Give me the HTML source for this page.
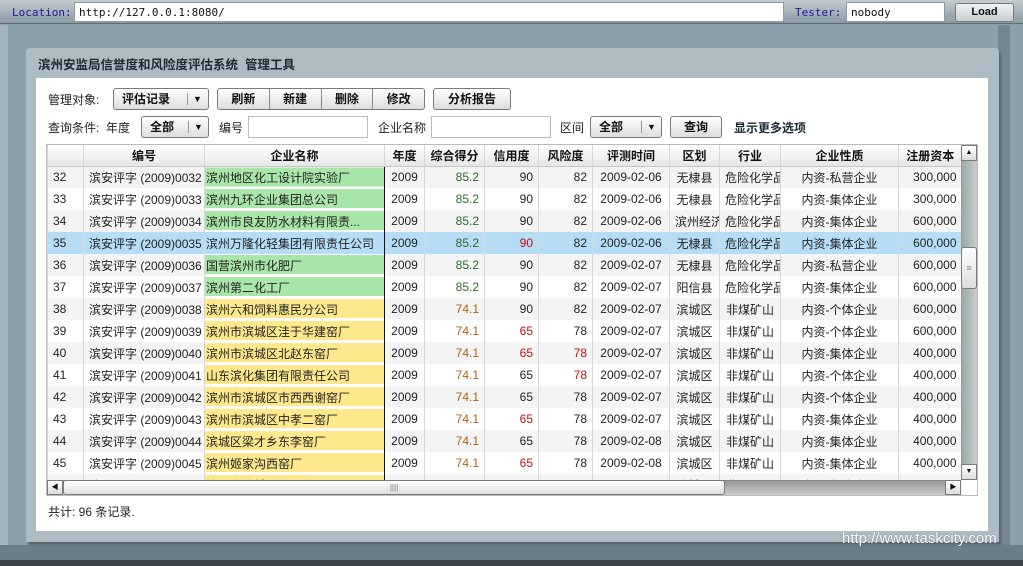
<!DOCTYPE html><html><head><meta charset="utf-8"><style>
*{box-sizing:border-box;margin:0;padding:0}
body{width:1023px;height:566px;overflow:hidden;position:relative;background:#8da0aa;font-family:"Liberation Sans","Noto Sans CJK SC",sans-serif;font-size:12px;color:#222}
.abs{position:absolute}
.topbar{left:0;top:0;width:1023px;height:24px;background:linear-gradient(#c4ccd0,#8a9aa3);border-bottom:1px solid #5e6e76}
.inp{background:#fff;border:1px solid #8c9aa2;height:20px;font-size:11px;font-family:"DejaVu Sans Mono","Liberation Mono",monospace;padding:3px 4px;color:#111}
.lbl{color:#1a1aa0;font-size:11px;font-family:"DejaVu Sans Mono",monospace}
.btn{background:linear-gradient(#fff,#ddd);border:1px solid #7a7a7a;border-radius:3px;font-weight:bold;text-align:center;color:#111;font-size:12px}
.panel{left:26px;top:48px;width:973px;height:494px;background:#adbbc2;border-radius:4px 4px 0 0;box-shadow:2px 3px 2px #56656d}
.white{left:36px;top:78px;width:952px;height:453px;background:#fff}
table{border-collapse:collapse;table-layout:fixed}
td,th{height:22px;border-left:1px solid #d8d8d8;white-space:nowrap;overflow:hidden;font-size:12px;font-weight:normal;padding:0 5px}
th{font-weight:bold;text-align:center;background:linear-gradient(#fff,#e6e6e6);border-bottom:1px solid #c8c8c8;height:21px;color:#111}
tr:nth-child(even) td{background:#f4f4f4}
tr.sel td{background:#b5ddf6!important}
td.n{text-align:left}
td.c{text-align:center}
td.r{text-align:right}
td.g{background:linear-gradient(#fff 0,#fff 1px,#a9e6a9 1px,#a9e6a9 20px,#fff 20px)!important;border-right:1px solid #111;padding-left:1px}
td.y{background:linear-gradient(#fff 0,#fff 1px,#fde98c 1px,#fde98c 20px,#fff 20px)!important;border-right:1px solid #111;padding-left:1px}
.sg{color:#2c6a2c}.so{color:#b06010}.red{color:#c01010}
</style></head><body>
<div class="abs topbar"></div>
<div class="abs lbl" style="left:12px;top:6px">Location:</div>
<div class="abs inp" style="left:74px;top:2px;width:710px">http://127.0.0.1:8080/</div>
<div class="abs lbl" style="left:795px;top:6px">Tester:</div>
<div class="abs inp" style="left:846px;top:2px;width:99px">nobody</div>
<div class="abs btn" style="left:955px;top:3px;width:59px;height:19px;font-size:11px;line-height:17px;background:linear-gradient(#eef1f2,#c6cfd3)">Load</div>
<div class="abs" style="left:0;top:25px;width:8px;height:535px;background:#a5b3ba"></div>
<div class="abs" style="left:0;top:545px;width:1023px;height:15px;background:#6b7e88"></div>
<div class="abs" style="left:0;top:560px;width:1023px;height:6px;background:#3b464c"></div>
<div class="abs" style="left:998px;top:25px;width:12px;height:520px;background:#74878f"></div>
<div class="abs panel"></div>
<div class="abs" style="left:38px;top:54px;font-weight:bold;font-size:12.5px;color:#1c2a33">滨州安监局信誉度和风险度评估系统&nbsp; 管理工具</div>
<div class="abs white"></div>
<div class="abs" style="left:48px;top:91px">管理对象:</div>
<div class="abs btn" style="left:113px;top:88px;width:96px;height:22px;line-height:20px;text-align:left;padding-left:8px">评估记录<span style="position:absolute;left:73px;top:4px;height:12px;border-left:1px solid #999"></span><span style="position:absolute;left:79px;font-size:9px">▼</span></div>
<div class="abs btn" style="left:217px;top:88px;width:208px;height:22px;line-height:20px;display:flex"><span style="flex:1;border-right:1px solid #888">刷新</span><span style="flex:1;border-right:1px solid #888">新建</span><span style="flex:1;border-right:1px solid #888">删除</span><span style="flex:1">修改</span></div>
<div class="abs btn" style="left:433px;top:88px;width:78px;height:22px;line-height:20px">分析报告</div>
<div class="abs" style="left:48px;top:119px">查询条件:&nbsp; 年度</div>
<div class="abs btn" style="left:141px;top:116px;width:68px;height:22px;line-height:20px;text-align:left;padding-left:8px">全部<span style="position:absolute;left:46px;top:4px;height:12px;border-left:1px solid #999"></span><span style="position:absolute;left:52px;font-size:9px">▼</span></div>
<div class="abs" style="left:219px;top:119px">编号</div>
<div class="abs inp" style="left:248px;top:116px;width:120px;height:22px;border-color:#bbb"></div>
<div class="abs" style="left:378px;top:119px">企业名称</div>
<div class="abs inp" style="left:431px;top:116px;width:120px;height:22px;border-color:#bbb"></div>
<div class="abs" style="left:560px;top:119px">区间</div>
<div class="abs btn" style="left:590px;top:116px;width:72px;height:22px;line-height:20px;text-align:left;padding-left:8px">全部<span style="position:absolute;left:50px;top:4px;height:12px;border-left:1px solid #999"></span><span style="position:absolute;left:56px;font-size:9px">▼</span></div>
<div class="abs btn" style="left:670px;top:116px;width:52px;height:22px;line-height:20px">查询</div>
<div class="abs" style="left:734px;top:119px;font-weight:bold;color:#1c2a33">显示更多选项</div>

<div class="abs" style="left:46px;top:144px;width:932px;height:352px;border:1px solid #bbb;overflow:hidden;background:#fff">
<table style="width:914px">
<colgroup><col style="width:36px"><col style="width:121px"><col style="width:180px"><col style="width:40px"><col style="width:60px"><col style="width:54px"><col style="width:54px"><col style="width:77px"><col style="width:50px"><col style="width:61px"><col style="width:118px"><col style="width:63px"></colgroup>
<tr><th></th><th>编号</th><th>企业名称</th><th>年度</th><th>综合得分</th><th>信用度</th><th>风险度</th><th>评测时间</th><th>区划</th><th>行业</th><th>企业性质</th><th>注册资本</th></tr>
<tr><td>32</td><td class="n">滨安评字 (2009)0032</td><td class="g">滨州地区化工设计院实验厂</td><td class="c">2009</td><td class="r sg">85.2</td><td class="r">90</td><td class="r">82</td><td class="c">2009-02-06</td><td class="c">无棣县</td><td>危险化学品</td><td class="c">内资-私营企业</td><td class="r">300,000</td></tr>
<tr><td>33</td><td class="n">滨安评字 (2009)0033</td><td class="g">滨州九环企业集团总公司</td><td class="c">2009</td><td class="r sg">85.2</td><td class="r">90</td><td class="r">82</td><td class="c">2009-02-06</td><td class="c">无棣县</td><td>危险化学品</td><td class="c">内资-集体企业</td><td class="r">300,000</td></tr>
<tr><td>34</td><td class="n">滨安评字 (2009)0034</td><td class="g">滨州市良友防水材料有限责...</td><td class="c">2009</td><td class="r sg">85.2</td><td class="r">90</td><td class="r">82</td><td class="c">2009-02-06</td><td>滨州经济</td><td>危险化学品</td><td class="c">内资-集体企业</td><td class="r">600,000</td></tr>
<tr class="sel"><td>35</td><td class="n">滨安评字 (2009)0035</td><td class="g">滨州万隆化轻集团有限责任公司</td><td class="c">2009</td><td class="r sg">85.2</td><td class="r red">90</td><td class="r">82</td><td class="c">2009-02-06</td><td class="c">无棣县</td><td>危险化学品</td><td class="c">内资-集体企业</td><td class="r">600,000</td></tr>
<tr><td>36</td><td class="n">滨安评字 (2009)0036</td><td class="g">国营滨州市化肥厂</td><td class="c">2009</td><td class="r sg">85.2</td><td class="r">90</td><td class="r">82</td><td class="c">2009-02-07</td><td class="c">无棣县</td><td>危险化学品</td><td class="c">内资-私营企业</td><td class="r">600,000</td></tr>
<tr><td>37</td><td class="n">滨安评字 (2009)0037</td><td class="g">滨州第二化工厂</td><td class="c">2009</td><td class="r sg">85.2</td><td class="r">90</td><td class="r">82</td><td class="c">2009-02-07</td><td class="c">阳信县</td><td>危险化学品</td><td class="c">内资-集体企业</td><td class="r">600,000</td></tr>
<tr><td>38</td><td class="n">滨安评字 (2009)0038</td><td class="y">滨州六和饲料惠民分公司</td><td class="c">2009</td><td class="r so">74.1</td><td class="r">90</td><td class="r">82</td><td class="c">2009-02-07</td><td class="c">滨城区</td><td class="c">非煤矿山</td><td class="c">内资-个体企业</td><td class="r">600,000</td></tr>
<tr><td>39</td><td class="n">滨安评字 (2009)0039</td><td class="y">滨州市滨城区洼于华建窑厂</td><td class="c">2009</td><td class="r so">74.1</td><td class="r red">65</td><td class="r">78</td><td class="c">2009-02-07</td><td class="c">滨城区</td><td class="c">非煤矿山</td><td class="c">内资-个体企业</td><td class="r">600,000</td></tr>
<tr><td>40</td><td class="n">滨安评字 (2009)0040</td><td class="y">滨州市滨城区北赵东窑厂</td><td class="c">2009</td><td class="r so">74.1</td><td class="r red">65</td><td class="r red">78</td><td class="c">2009-02-07</td><td class="c">滨城区</td><td class="c">非煤矿山</td><td class="c">内资-集体企业</td><td class="r">400,000</td></tr>
<tr><td>41</td><td class="n">滨安评字 (2009)0041</td><td class="y">山东滨化集团有限责任公司</td><td class="c">2009</td><td class="r so">74.1</td><td class="r">65</td><td class="r red">78</td><td class="c">2009-02-07</td><td class="c">滨城区</td><td class="c">非煤矿山</td><td class="c">内资-个体企业</td><td class="r">400,000</td></tr>
<tr><td>42</td><td class="n">滨安评字 (2009)0042</td><td class="y">滨州市滨城区市西西谢窑厂</td><td class="c">2009</td><td class="r so">74.1</td><td class="r">65</td><td class="r">78</td><td class="c">2009-02-07</td><td class="c">滨城区</td><td class="c">非煤矿山</td><td class="c">内资-个体企业</td><td class="r">400,000</td></tr>
<tr><td>43</td><td class="n">滨安评字 (2009)0043</td><td class="y">滨州市滨城区中孝二窑厂</td><td class="c">2009</td><td class="r so">74.1</td><td class="r red">65</td><td class="r">78</td><td class="c">2009-02-07</td><td class="c">滨城区</td><td class="c">非煤矿山</td><td class="c">内资-集体企业</td><td class="r">400,000</td></tr>
<tr><td>44</td><td class="n">滨安评字 (2009)0044</td><td class="y">滨城区梁才乡东李窑厂</td><td class="c">2009</td><td class="r so">74.1</td><td class="r">65</td><td class="r">78</td><td class="c">2009-02-08</td><td class="c">滨城区</td><td class="c">非煤矿山</td><td class="c">内资-集体企业</td><td class="r">400,000</td></tr>
<tr><td>45</td><td class="n">滨安评字 (2009)0045</td><td class="y">滨州姬家沟西窑厂</td><td class="c">2009</td><td class="r so">74.1</td><td class="r red">65</td><td class="r">78</td><td class="c">2009-02-08</td><td class="c">滨城区</td><td class="c">非煤矿山</td><td class="c">内资-集体企业</td><td class="r">400,000</td></tr>
<tr><td>46</td><td class="n">滨安评字 (2009)0046</td><td class="y">滨州市滨城区某某窑厂</td><td class="c">2009</td><td class="r so">74.1</td><td class="r">65</td><td class="r">78</td><td class="c">2009-02-08</td><td class="c">滨城区</td><td class="c">非煤矿山</td><td class="c">内资-集体企业</td><td class="r">400,000</td></tr>
</table>
<div class="abs" style="left:914px;top:0;width:16px;height:335px;background:linear-gradient(90deg,#9aa,#ccc);border-left:1px solid #999"></div>
<div class="abs btn" style="left:914px;top:0;width:16px;height:16px;font-size:7px;line-height:14px;border-radius:0">▲</div>
<div class="abs btn" style="left:914px;top:102px;width:16px;height:42px;font-size:9px;line-height:40px;font-weight:normal;color:#888">≡</div>
<div class="abs btn" style="left:914px;top:319px;width:16px;height:16px;font-size:7px;line-height:14px;border-radius:0">▼</div>
<div class="abs" style="left:0;top:335px;width:914px;height:15px;background:linear-gradient(#999,#ccc);border-top:1px solid #888"></div>
<div class="abs btn" style="left:0;top:335px;width:16px;height:15px;font-size:7px;line-height:13px;border-radius:0">◀</div>
<div class="abs btn" style="left:16px;top:335px;width:662px;height:15px;font-size:8px;line-height:13px;font-weight:normal;color:#777">||||</div>
<div class="abs btn" style="left:898px;top:335px;width:16px;height:15px;font-size:7px;line-height:13px;border-radius:0">▶</div>
</div>
<div class="abs" style="left:48px;top:503px">共计: 96 条记录.</div>
<div class="abs" style="left:842px;top:530px;color:#fff;font-size:15px;font-family:'Liberation Sans',sans-serif;text-shadow:0 0 1px #556">http://www.taskcity.com</div>
</body></html>
